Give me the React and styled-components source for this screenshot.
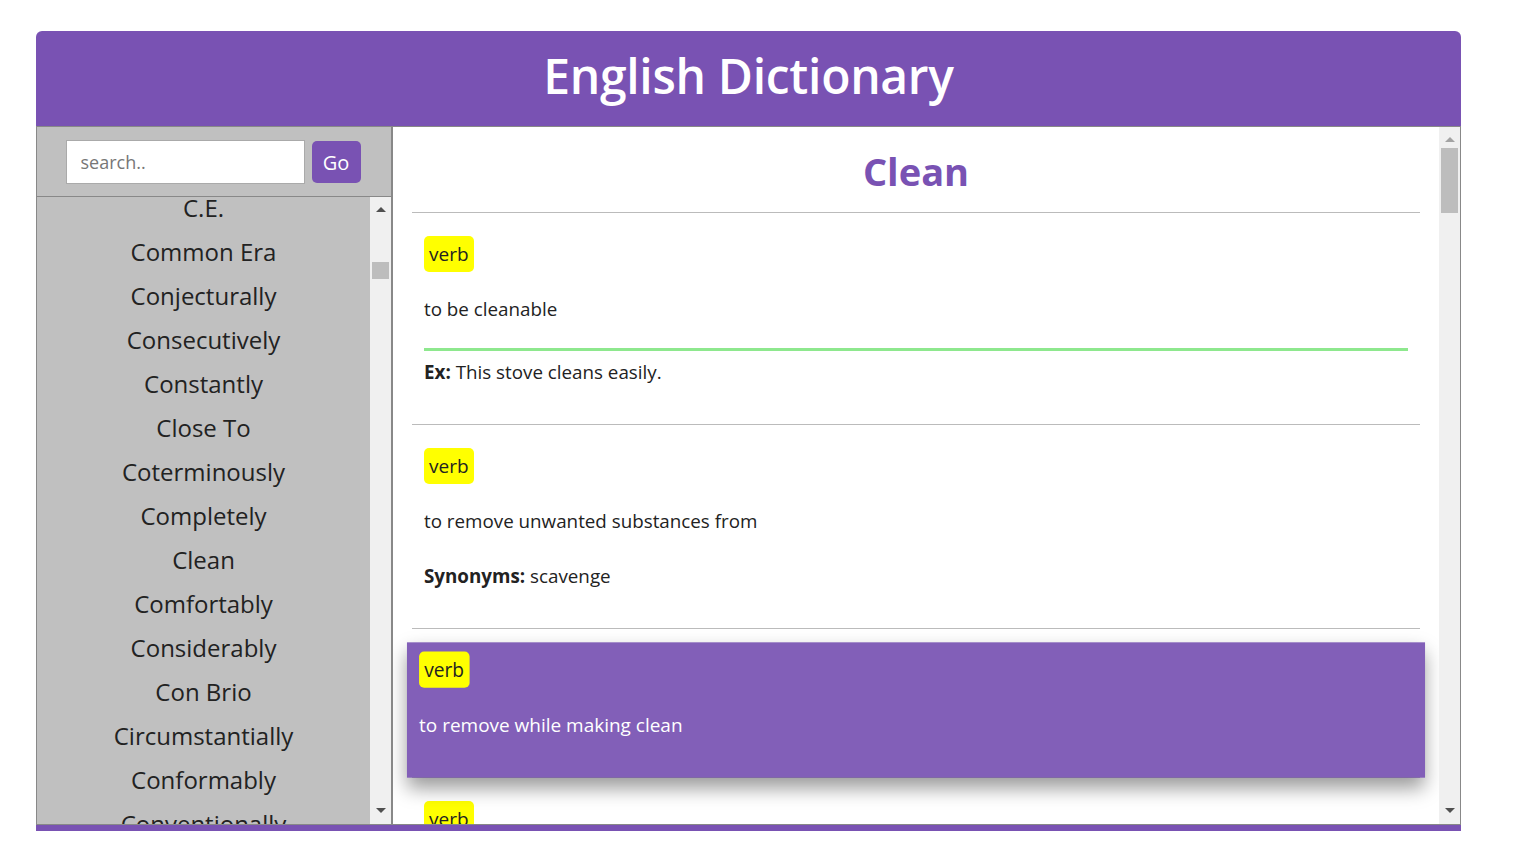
import React, { useLayoutEffect, useRef } from 'react';
import styled, { createGlobalStyle } from 'styled-components';

const GlobalStyle = createGlobalStyle`
  * { box-sizing: border-box; }
  body {
    margin: 0;
    background: #fff;
    font-family: "Open Sans", "Noto Sans", sans-serif;
    color: #222;
  }
`;

const Page = styled.div`
  padding: 31px 64px 27px 36px;
`;

const Frame = styled.div`
  width: 1425px;
  height: 800px;
  background: #7952b3;
  border-radius: 6px 6px 0 0;
  display: flex;
  flex-direction: column;
  padding-bottom: 6px;
`;

const Header = styled.header`
  height: 95px;
  display: flex;
  align-items: center;
  justify-content: center;
  color: #fff;
  font-size: 48px;
  font-weight: 600;
  letter-spacing: -0.3px;
  padding-bottom: 6px;
`;

const Body = styled.div`
  flex: 1;
  min-height: 0;
  display: flex;
  border: 1px solid #888;
  background: #fff;
`;

const Sidebar = styled.aside`
  width: 356px;
  flex-shrink: 0;
  background: #c0c0c0;
  border-right: 2px solid #888;
  display: flex;
  flex-direction: column;
`;

const SearchBar = styled.form`
  height: 70px;
  display: flex;
  align-items: center;
  justify-content: center;
  gap: 7px;
  border-bottom: 1px solid #888;
  flex-shrink: 0;
  padding: 1px 2px 0 0;
`;

const SearchInput = styled.input`
  width: 239px;
  height: 44px;
  border: 1px solid #aaa;
  background: #fff;
  padding: 0 14px;
  font-family: inherit;
  font-size: 18px;
  color: #333;
  outline: none;
  &::placeholder { color: #777; }
`;

const GoButton = styled.button`
  width: 49px;
  height: 42px;
  border: none;
  border-radius: 5px;
  background: #7952b3;
  color: #fff;
  font-family: inherit;
  font-size: 20px;
  cursor: pointer;
`;

const Pane = styled.div`
  flex: 1;
  min-height: 0;
  min-width: 0;
  display: flex;
`;

const Scroller = styled.div`
  flex: 1;
  min-width: 0;
  overflow-y: scroll;
  scrollbar-width: none;
  &::-webkit-scrollbar { display: none; }
`;

/* scroll rail drawn next to the hidden native scrollbar */
const Rail = styled.div`
  width: 21px;
  flex-shrink: 0;
  background: #f0f0f0;
  display: flex;
  flex-direction: column;
`;

const RailButton = styled.div`
  height: 23px;
  flex-shrink: 0;
  display: flex;
  align-items: center;
  justify-content: center;
  padding-top: ${(p) => (p.$down ? '0' : '1px')};
  padding-bottom: ${(p) => (p.$down ? '4px' : '0')};
`;

const Arrow = styled.span`
  width: 0;
  height: 0;
  border-left: 5px solid transparent;
  border-right: 5px solid transparent;
  ${(p) => (p.$down ? 'border-top' : 'border-bottom')}: 5px solid ${(p) => p.$color};
`;

const Track = styled.div`
  flex: 1;
  padding: 0 2px;
`;

const Thumb = styled.div`
  margin-top: ${(p) => p.$offset}px;
  height: ${(p) => p.$size}px;
  background: #bdbdbd;
`;

const ScrollRail = ({ offset, size, upColor = '#505050' }) => (
  <Rail>
    <RailButton>
      <Arrow $color={upColor} />
    </RailButton>
    <Track>
      <Thumb $offset={offset} $size={size} />
    </Track>
    <RailButton $down>
      <Arrow $down $color="#505050" />
    </RailButton>
  </Rail>
);

const WordList = styled.ul`
  list-style: none;
  margin: 0;
  padding: 0;
`;

const WordItem = styled.li`
  height: 44px;
  line-height: 44px;
  text-align: center;
  font-size: 24px;
  color: #222;
  cursor: pointer;
  white-space: nowrap;
`;

const Content = styled.main`
  padding: 0 19px;
`;

const Title = styled.h2`
  margin: 20px 0 17px;
  text-align: center;
  font-size: 38px;
  line-height: 48px;
  font-weight: 700;
  color: #7952b3;
`;

const Rule = styled.hr`
  border: none;
  border-top: 1px solid #bbb;
  margin: 0 0 14px;
`;

const Entry = styled.section`
  padding: 9px 12px 14px;
  font-size: 18.8px;
  line-height: 27px;
  color: ${(p) => (p.$active ? '#fff' : '#222')};
  background: ${(p) => (p.$active ? '#825fb8' : 'transparent')};
  box-shadow: ${(p) => (p.$active ? '0 10px 18px rgba(0, 0, 0, 0.4)' : 'none')};
  transform: ${(p) => (p.$active ? 'scale(1.01)' : 'none')};
  position: relative;
  z-index: ${(p) => (p.$active ? 1 : 0)};
`;

const Badge = styled.span`
  display: inline-block;
  height: 36px;
  line-height: 36px;
  padding: 0 5px;
  border-radius: 5px;
  background: #ffff00;
  color: #222;
  font-size: 19px;
`;

const Definition = styled.p`
  margin: 24px 0 ${(p) => p.$after || 24}px;
`;

const ExampleRule = styled.div`
  height: 3px;
  background: #8ee88e;
  margin: 0 0 8px;
`;

const Label = styled.b`
  font-weight: 700;
`;

const Note = styled.p`
  margin: 0 0 24px;
`;

const hiddenWords = [
  'Cab', 'Cabal', 'Cabin', 'Cable', 'Cache', 'Cadence', 'Cafe', 'Cage', 'Cake', 'Calm',
  'Camera', 'Camp', 'Canal', 'Candid', 'Canvas', 'Capable', 'Capital', 'Captain', 'Carbon', 'Career',
  'Careful', 'Cargo', 'Carpet', 'Carry', 'Castle', 'Casual', 'Catalog', 'Cattle', 'Caution', 'Cavity',
  'Cease', 'Celery', 'Cellar', 'Cement', 'Census', 'Center', 'Certain', 'Chain', 'Chair', 'Chalk',
];

const visibleWords = [
  'C.E.', 'Common Era', 'Conjecturally', 'Consecutively', 'Constantly', 'Close To',
  'Coterminously', 'Completely', 'Clean', 'Comfortably', 'Considerably', 'Con Brio',
  'Circumstantially', 'Conformably', 'Conventionally',
];

const tailWords = [
  'Cordially', 'Correctly', 'Courageously', 'Covertly', 'Crisply', 'Critically', 'Crucially',
  'Cruelly', 'Curiously', 'Currently', 'Cynically', 'Calmly', 'Candidly', 'Carefully',
  'Casually', 'Cautiously', 'Certainly', 'Cheerfully', 'Clearly', 'Cleverly',
];

const words = [
  ...hiddenWords,
  ...visibleWords,
  ...Array.from({ length: 445 }, (_, i) => tailWords[i % tailWords.length]),
];

const senses = [
  { pos: 'verb', text: 'to be cleanable', example: 'This stove cleans easily.' },
  { pos: 'verb', text: 'to remove unwanted substances from', synonyms: 'scavenge' },
  { pos: 'verb', text: 'to remove while making clean' },
  { pos: 'verb', text: 'make clean by removing dirt, filth, or unwanted substances from', example: 'Clean the stove!' },
  { pos: 'verb', text: 'remove unwanted substances from, such as feathers or pits', synonyms: 'pick' },
  { pos: 'verb', text: 'deprive wholly of money in a gambling game, robbery, etc.', synonyms: 'clean out' },
  { pos: 'adjective', text: 'free from dirt or impurities', example: 'clean water' },
  { pos: 'adjective', text: 'free of restrictions or qualifications', synonyms: 'clear' },
  { pos: 'adverb', text: 'completely; used as intensifiers', example: 'clean forgot the appointment' },
];

const entries = Array.from({ length: 36 }, (_, i) => ({
  ...senses[i % senses.length],
  active: i === 2,
}));

const App = () => {
  const listRef = useRef(null);

  useLayoutEffect(() => {
    if (listRef.current) {
      listRef.current.scrollTop = hiddenWords.length * 44 + 11;
    }
  }, []);

  return (
    <Page>
      <GlobalStyle />
      <Frame>
        <Header>English Dictionary</Header>
        <Body>
          <Sidebar>
            <SearchBar onSubmit={(e) => e.preventDefault()}>
              <SearchInput type="text" placeholder="search.." />
              <GoButton type="submit">Go</GoButton>
            </SearchBar>
            <Pane>
              <Scroller ref={listRef}>
                <WordList>
                  {words.map((w, i) => (
                    <WordItem key={i}>{w}</WordItem>
                  ))}
                </WordList>
              </Scroller>
              <ScrollRail offset={42} size={17} />
            </Pane>
          </Sidebar>
          <Pane>
            <Scroller>
              <Content>
                <Title>Clean</Title>
                <Rule />
                {entries.map((e, i) => (
                  <React.Fragment key={i}>
                    <Entry $active={e.active}>
                      <Badge>{e.pos}</Badge>
                      <Definition $after={e.example ? 25 : e.synonyms ? 28 : 24}>{e.text}</Definition>
                      {e.example && (
                        <>
                          <ExampleRule />
                          <Note>
                            <Label>Ex:</Label> {e.example}
                          </Note>
                        </>
                      )}
                      {e.synonyms && (
                        <Note>
                          <Label>Synonyms:</Label> {e.synonyms}
                        </Note>
                      )}
                    </Entry>
                    <Rule />
                  </React.Fragment>
                ))}
              </Content>
            </Scroller>
            <ScrollRail offset={-2} size={65} upColor="#a3a3a3" />
          </Pane>
        </Body>
      </Frame>
    </Page>
  );
};

export default App;
